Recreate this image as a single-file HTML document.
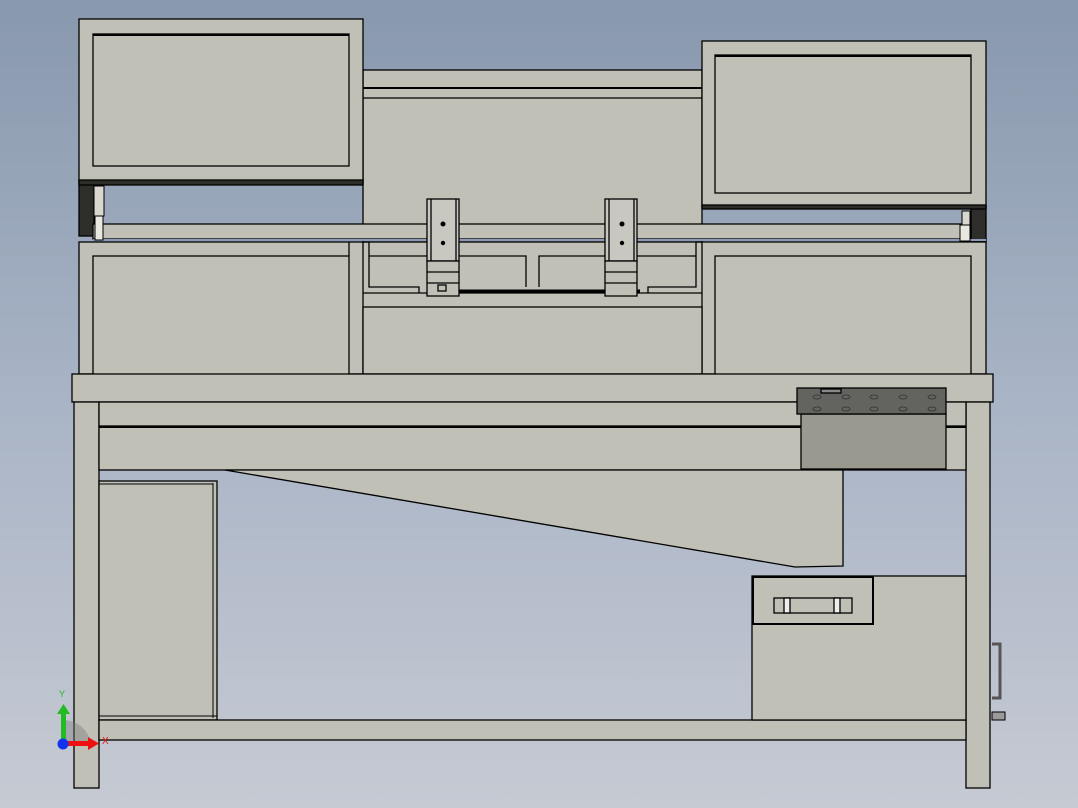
<!DOCTYPE html>
<html><head><style>
html,body{margin:0;padding:0;width:1078px;height:808px;overflow:hidden;}
body{background:linear-gradient(#8898ad,#a9b4c6 50%,#c6cad3);}
svg{position:absolute;left:0;top:0;}
text{font-family:"Liberation Sans",sans-serif;}
</style></head><body>
<svg width="1078" height="808" viewBox="0 0 1078 808">
<g stroke="#000" stroke-width="1.3" fill="#c0c0b7">
<!-- center back panel -->
<rect x="363" y="70" width="339" height="172"/>
<line x1="363" y1="88" x2="702" y2="88" stroke-width="2"/>
<line x1="363" y1="98" x2="702" y2="98"/>
<!-- dark side blocks -->
<rect x="79" y="180" width="15" height="56" fill="#2e2e2a"/>
<rect x="971" y="206" width="15" height="36" fill="#2e2e2a"/>
<!-- rail -->
<rect x="93" y="224" width="878" height="15"/>
<line x1="93" y1="240" x2="986" y2="240" stroke="#8d99b8" stroke-width="2"/>
<!-- cylinders -->
<rect x="94" y="186" width="10" height="30" fill="#d8d8d0" stroke-width="1"/>
<rect x="95" y="216" width="8" height="24" fill="#e8e8e0" stroke-width="1"/>
<rect x="962" y="211" width="8" height="14" fill="#d8d8d0" stroke-width="1"/>
<rect x="960" y="225" width="10" height="16" fill="#e8e8e0" stroke-width="1"/>
<!-- top left box -->
<rect x="79" y="19" width="284" height="164"/>
<rect x="93" y="34" width="256" height="132"/>
<line x1="93" y1="35" x2="349" y2="35" stroke-width="2"/>
<rect x="79" y="180" width="284" height="5" fill="#2e2e2a"/>
<!-- top right box -->
<rect x="702" y="41" width="284" height="166"/>
<rect x="715" y="55" width="256" height="138"/>
<line x1="715" y1="56" x2="971" y2="56" stroke-width="2"/>
<rect x="702" y="205" width="284" height="4" fill="#2e2e2a"/>
<!-- lower frame -->
<rect x="79" y="242" width="907" height="132"/>
<rect x="93" y="256" width="256" height="120"/>
<rect x="715" y="256" width="256" height="120"/>
<line x1="349" y1="242" x2="349" y2="256"/>
<polyline points="363,374 363,242 369,242 369,287 419,287 419,293" fill="none"/>
<polyline points="702,374 702,242 696,242 696,287 648,287 648,293" fill="none"/>
<polyline points="369,256 526,256 526,287" fill="none"/>
<polyline points="696,256 539,256 539,287" fill="none"/>
<line x1="363" y1="293" x2="702" y2="293"/>
<rect x="363" y="307" width="339" height="67"/>
<line x1="427" y1="291" x2="640" y2="291" stroke-width="3"/>
<!-- modules -->
<rect x="427" y="199" width="32" height="62" fill="#c8c8c0"/>
<line x1="431" y1="199" x2="431" y2="261"/><line x1="456" y1="199" x2="456" y2="261"/>
<rect x="427" y="261" width="32" height="35"/>
<line x1="427" y1="272" x2="459" y2="272"/><line x1="427" y1="283" x2="459" y2="283"/>
<rect x="605" y="199" width="32" height="62" fill="#c8c8c0"/>
<line x1="609" y1="199" x2="609" y2="261"/><line x1="634" y1="199" x2="634" y2="261"/>
<rect x="605" y="261" width="32" height="35"/>
<line x1="605" y1="272" x2="637" y2="272"/><line x1="605" y1="283" x2="637" y2="283"/>
<rect x="438" y="285" width="8" height="6"/>
</g>
<g fill="#000">
<circle cx="443" cy="224" r="2.5"/><circle cx="443" cy="243" r="2.2"/>
<circle cx="622" cy="224" r="2.5"/><circle cx="622" cy="243" r="2.2"/>
</g>
<g stroke="#000" stroke-width="1.3" fill="#c0c0b7">
<!-- table top -->
<rect x="72" y="374" width="921" height="28"/>
<!-- legs & apron -->
<rect x="74" y="402" width="25" height="386"/>
<rect x="966" y="402" width="24" height="386"/>
<rect x="99" y="402" width="867" height="24"/>
<!-- beam -->
<rect x="99" y="427" width="867" height="43"/>
<line x1="99" y1="427" x2="966" y2="427" stroke-width="2"/>
<!-- hopper -->
<polygon points="225,470 843,470 843,566 795,567"/>
<!-- dark box -->
<rect x="801" y="414" width="145" height="55" fill="#999990"/>
<rect x="797" y="388" width="149" height="26" fill="#636360"/>
<rect x="821" y="389" width="20" height="4" fill="#888"/>
<!-- left cabinet -->
<rect x="99" y="481" width="118" height="239"/>
<line x1="213" y1="483" x2="213" y2="718" stroke-width="1"/>
<line x1="99" y1="484" x2="213" y2="484" stroke-width="1"/>
<line x1="99" y1="716" x2="217" y2="716" stroke-width="1"/>
<!-- bottom rail -->
<rect x="99" y="720" width="867" height="20"/>
<!-- right lower box -->
<rect x="752" y="576" width="214" height="144"/>
<rect x="753" y="577" width="120" height="47" stroke-width="2"/>
<rect x="774" y="598" width="78" height="15"/>
<rect x="784" y="598" width="6" height="15" fill="#eee"/>
<rect x="834" y="598" width="6" height="15" fill="#eee"/>
<!-- side handle -->
<path d="M992 644 H1000 V698 H992" fill="none" stroke="#555" stroke-width="3"/>
<rect x="992" y="712" width="13" height="8" fill="#999" stroke-width="1"/>
</g>
<g fill="none" stroke="#333" stroke-width="0.8">
<ellipse cx="817" cy="397" rx="4" ry="2"/><ellipse cx="846" cy="397" rx="4" ry="2"/><ellipse cx="874" cy="397" rx="4" ry="2"/><ellipse cx="903" cy="397" rx="4" ry="2"/><ellipse cx="932" cy="397" rx="4" ry="2"/>
<ellipse cx="817" cy="409" rx="4" ry="2"/><ellipse cx="846" cy="409" rx="4" ry="2"/><ellipse cx="874" cy="409" rx="4" ry="2"/><ellipse cx="903" cy="409" rx="4" ry="2"/><ellipse cx="932" cy="409" rx="4" ry="2"/>
</g>
<!-- axis triad -->
<path d="M63 720 A28 28 0 0 1 91 744 L63 744 Z" fill="#777" opacity="0.4"/>
<rect x="61" y="712" width="5" height="30" fill="#22bb22"/>
<polygon points="57,714 63.5,704 70,714" fill="#22bb22"/>
<rect x="66" y="741" width="24" height="5" fill="#ee1111"/>
<polygon points="88,737 99,743.5 88,750" fill="#ee1111"/>
<circle cx="63" cy="744" r="5.5" fill="#1133ee"/>
<text x="59" y="697" font-size="9" fill="#22bb22">Y</text>
<text x="102" y="744" font-size="10" fill="#ee1111">X</text>
</svg>
</body></html>
